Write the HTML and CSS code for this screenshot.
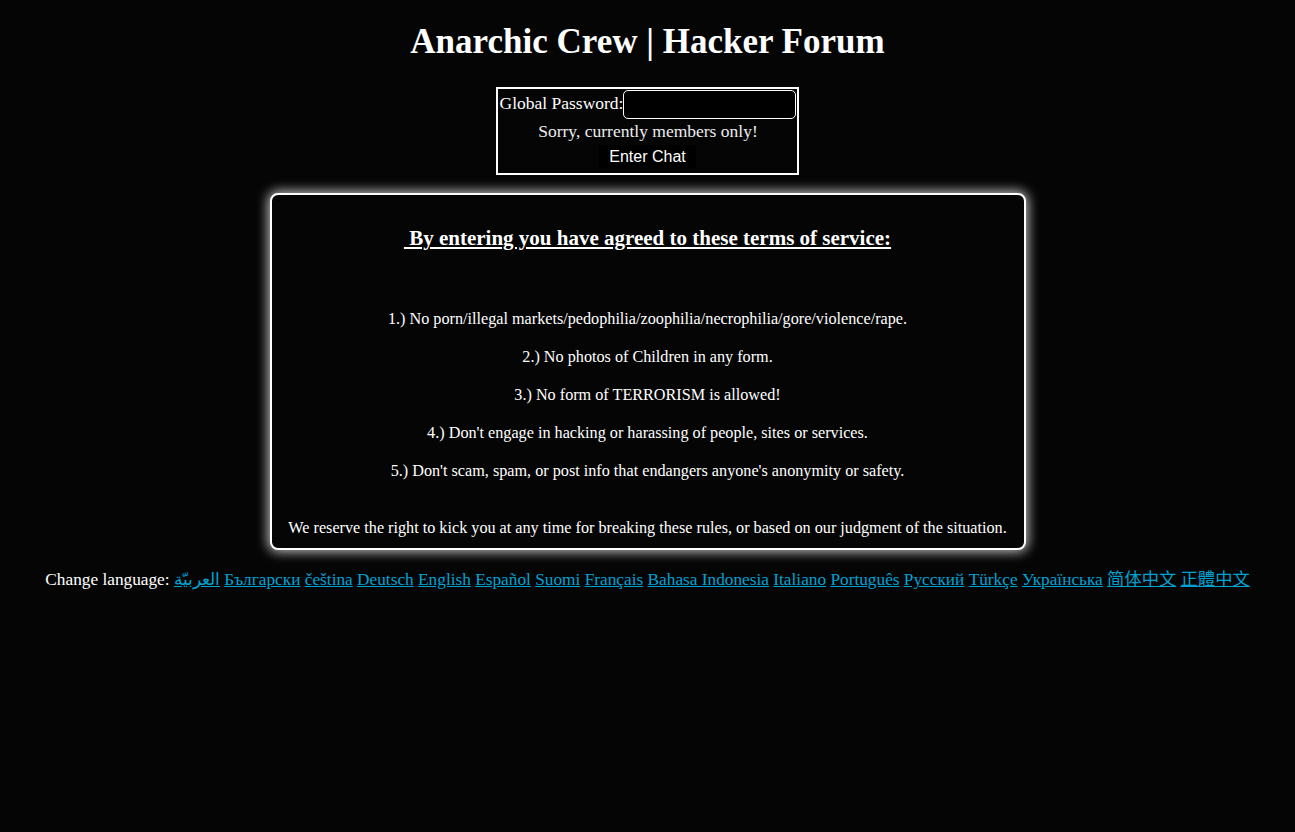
FILE: index.html
```html
<!DOCTYPE html>
<html lang="en">
<head>
<meta charset="utf-8">
<title>Anarchic Crew | Hacker Forum</title>
<link rel="stylesheet" href="styles.css">
</head>
<body>
<h1 class="title">Anarchic Crew | Hacker Forum</h1>
<form class="login">
  <table class="login-table">
    <tr><td class="pass-row">Global Password:<input class="pass-input" type="password"></td></tr>
    <tr><td class="notice">Sorry, currently members only!</td></tr>
    <tr><td class="btn-cell"><button type="button" class="enter-btn">Enter Chat</button></td></tr>
  </table>
</form>
<div class="terms">
  <h2 class="terms-head">&nbsp;By entering you have agreed to these terms of service:</h2>
  <div class="rules">
    <p class="rule">1.) No porn/illegal markets/pedophilia/zoophilia/necrophilia/gore/violence/rape.</p>
    <p class="rule">2.) No photos of Children in any form.</p>
    <p class="rule">3.) No form of TERRORISM is allowed!</p>
    <p class="rule">4.) Don't engage in hacking or harassing of people, sites or services.</p>
    <p class="rule">5.) Don't scam, spam, or post info that endangers anyone's anonymity or safety.</p>
  </div>
  <p class="reserve">We reserve the right to kick you at any time for breaking these rules, or based on our judgment of the situation.</p>
</div>
<p class="langs">Change language: <a href="#" lang="ar" dir="rtl">العربيّة</a> <a href="#">Български</a> <a href="#">čeština</a> <a href="#">Deutsch</a> <a href="#">English</a> <a href="#">Español</a> <a href="#">Suomi</a> <a href="#">Français</a> <a href="#">Bahasa Indonesia</a> <a href="#">Italiano</a> <a href="#">Português</a> <a href="#">Русский</a> <a href="#">Türkçe</a> <a href="#">Українська</a> <a href="#" lang="zh-CN">简体中文</a> <a href="#" lang="zh-TW">正體中文</a></p>
</body>
</html>
```
FILE: styles.css
```css
html, body {
  background: #050505;
}
body {
  margin: 8px;
  color: #ffffff;
  font-family: "Liberation Serif", "Noto Sans CJK SC", serif;
  font-size: 17.5px;
  text-align: center;
}
.title {
  font-size: 35px;
  line-height: 40px;
  font-weight: bold;
  margin: 14px 0 25px;
}
.login {
  margin: 0;
}
.login-table {
  margin: 0 auto;
  border: 2px solid #ffffff;
  border-spacing: 0;
}
.login-table td {
  padding: 1px 1px 1px 2px;
  text-align: center;
}
.pass-row {
  white-space: nowrap;
}
.pass-input {
  width: 173px;
  height: 29px;
  box-sizing: border-box;
  margin: 0;
  vertical-align: middle;
  background: #000000;
  color: #ffffff;
  border: 1px solid #ffffff;
  border-radius: 5px;
}
.login-table .notice {
  color: #eeeeee;
  line-height: 20px;
}
.login-table .btn-cell {
  padding: 3px 1px 5px;
}
.enter-btn {
  display: block;
  margin: 0 auto;
  font-family: "Liberation Sans", Arial, sans-serif;
  font-size: 16px;
  background: #000000;
  color: #ffffff;
  border: none;
  padding: 2px 10px;
  height: 23px;
}
.terms {
  width: 756px;
  box-sizing: border-box;
  margin: 18px auto 0;
  padding: 14px 16px 0;
  border: 2px solid #ffffff;
  border-radius: 8px;
  box-shadow: 0 0 12px 2px rgba(255, 255, 255, 0.75);
  background: #050505;
}
.terms-head {
  font-size: 21px;
  line-height: 24px;
  text-decoration: underline;
  margin: 17px 0 60px;
}
.rule {
  font-size: 16.2px;
  line-height: 18px;
  margin: 0 0 20px;
}
.reserve {
  font-size: 16.2px;
  line-height: 18px;
  white-space: nowrap;
  margin: 39px 0 11px;
}
.langs {
  margin: 20px 0;
  font-size: 17.3px;
  line-height: 20px;
}
.langs a {
  color: #00a2d4;
}
```
